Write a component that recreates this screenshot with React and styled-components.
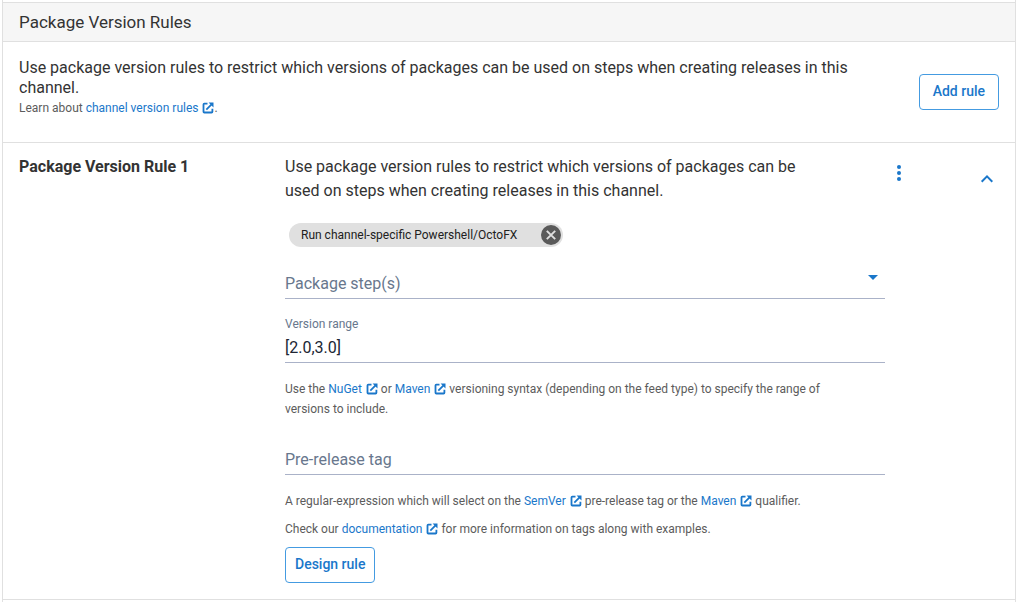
import React, { useState } from "react";
import styled, { createGlobalStyle } from "styled-components";

const colors = {
  blue: "#1a77ca",
  blueBorder: "#449be1",
  text: "#333333",
  muted: "#5c5c5c",
  label: "#68778d",
  fieldLine: "#aab2c8",
  line: "#e0e0e0",
};

const GlobalStyle = createGlobalStyle`
  *, *::before, *::after { box-sizing: border-box; }
  body {
    margin: 0;
    background: #ffffff;
    color: ${colors.text};
    font-family: Roboto, "Liberation Sans", sans-serif;
    font-size: 16px;
  }
`;

const Panel = styled.main`
  min-height: 100vh;
  padding-top: 2px;
  margin: 0 2px;
  border-left: 1px solid ${colors.line};
  border-right: 1px solid ${colors.line};
`;

const PanelHeader = styled.header`
  padding: 8px 16px;
  background: #f6f6f6;
  border-top: 1px solid ${colors.line};
  border-bottom: 1px solid ${colors.line};
`;

const PanelTitle = styled.h1`
  margin: 0;
  font-size: 17px;
  font-weight: 400;
  line-height: 22px;
`;

const Intro = styled.section`
  display: flex;
  align-items: center;
  justify-content: space-between;
  gap: 40px;
  padding: 16px;
  border-bottom: 1px solid ${colors.line};
`;

const IntroBody = styled.div`
  padding-bottom: 8px;
`;

const IntroText = styled.p`
  margin: 0;
  line-height: 20px;
`;

const Help = styled.p`
  margin: 0;
  color: ${colors.muted};
  font-size: 12px;
  line-height: 20px;
`;

const Link = styled.a`
  color: ${colors.blue};
  text-decoration: none;
`;

const LinkMark = styled.svg`
  width: 12px;
  height: 12px;
  margin-left: 4px;
  vertical-align: -2px;
`;

const OutlineButton = styled.button`
  flex: none;
  height: 36px;
  padding: 0 ${(p) => p.$pad}px 2px;
  border: 1px solid ${colors.blueBorder};
  border-radius: 4px;
  background: #ffffff;
  color: ${colors.blue};
  font: 500 14px/20px Roboto, "Liberation Sans", sans-serif;
  cursor: pointer;
`;

const Rule = styled.section`
  display: grid;
  grid-template-columns: 266px minmax(0, 1fr) 28px 86px;
  padding: 12px 16px 16px;
  border-bottom: 1px solid ${colors.line};
`;

const RuleTitle = styled.h2`
  margin: 0;
  font-size: 16px;
  font-weight: 700;
  line-height: 24px;
`;

const RuleSummary = styled.p`
  max-width: 540px;
  margin: 0;
  line-height: 24px;
`;

const IconButton = styled.button`
  display: flex;
  justify-content: center;
  justify-self: ${(p) => p.$align};
  align-self: start;
  width: 24px;
  height: 24px;
  margin-top: ${(p) => p.$top}px;
  padding: 0;
  border: 0;
  background: none;
  color: ${colors.blue};
  cursor: pointer;
`;

const Chip = styled.div`
  display: inline-flex;
  align-items: center;
  justify-content: space-between;
  gap: 12px;
  min-width: 274px;
  height: 24px;
  margin: 20px 4px 0;
  padding: 0 1px 0 12px;
  border-radius: 12px;
  background: #e0e0e0;
  color: #202020;
  font-size: 12px;
`;

const ChipRemove = styled.button`
  display: flex;
  width: 22px;
  height: 22px;
  padding: 0;
  border: 0;
  background: none;
  cursor: pointer;
`;

const Field = styled.div`
  display: flex;
  flex-direction: column;
  margin-top: ${(p) => p.$top}px;
  border-bottom: 1px solid ${colors.fieldLine};
`;

const FieldLabel = styled.label`
  color: ${colors.label};
  font-size: 12px;
  line-height: 20px;
`;

const TextInput = styled.input`
  width: 100%;
  height: 28px;
  padding: 0 0 2px;
  border: 0;
  outline: 0;
  background: none;
  color: #202634;
  font: 400 16px/24px Roboto, "Liberation Sans", sans-serif;
  &::placeholder { color: ${colors.label}; opacity: 1; }
`;

const SelectField = styled.div`
  display: grid;
  grid-template-columns: minmax(0, 1fr) 24px;
  margin-top: 23px;
  border-bottom: 1px solid ${colors.fieldLine};
`;

const Select = styled.select`
  grid-area: 1 / 1 / 2 / 3;
  width: 100%;
  height: 28px;
  padding: 0;
  border: 0;
  outline: 0;
  appearance: none;
  background: none;
  color: ${colors.label};
  font: 400 16px/24px Roboto, "Liberation Sans", sans-serif;
`;

const SelectArrow = styled.svg`
  grid-area: 1 / 2;
  width: 24px;
  height: 16px;
  pointer-events: none;
`;

const HelpBlock = styled.div`
  display: grid;
  gap: 8px;
  max-width: 560px;
  margin-top: 16px;
`;

const Actions = styled.div`
  display: flex;
  margin-top: 8px;
`;

function ExternalLink({ href, children }) {
  return (
    <Link href={href}>
      {children}
      <LinkMark viewBox="0 0 12 12" aria-hidden="true">
        <path d="M5.5 1.6H2.3Q1.5 1.6 1.5 2.4V9.7Q1.5 10.5 2.3 10.5H9.6Q10.4 10.5 10.4 9.7V6.8" fill="none" stroke="currentColor" strokeWidth="1.8" />
        <path d="M4.3 7.7L9.8 2.2" stroke="currentColor" strokeWidth="1.8" />
        <path d="M6.6 .5H11.5V5.4Z" fill="currentColor" />
      </LinkMark>
    </Link>
  );
}

export default function App() {
  const [range, setRange] = useState("[2.0,3.0]");
  const [tag, setTag] = useState("");
  return (
    <>
      <GlobalStyle />
      <Panel>
        <PanelHeader>
          <PanelTitle>Package Version Rules</PanelTitle>
        </PanelHeader>
        <Intro>
          <IntroBody>
            <IntroText>
              Use package version rules to restrict which versions of packages can be used on steps when creating releases in this channel.
            </IntroText>
            <Help>
              Learn about <ExternalLink href="#rules">channel version rules</ExternalLink>.
            </Help>
          </IntroBody>
          <OutlineButton type="button" $pad={13}>Add rule</OutlineButton>
        </Intro>
        <Rule>
          <RuleTitle>Package Version Rule 1</RuleTitle>
          <div>
            <RuleSummary>
              Use package version rules to restrict which versions of packages can be used on steps when creating releases in this channel.
            </RuleSummary>
            <Chip>
              Run channel-specific Powershell/OctoFX
              <ChipRemove type="button" aria-label="Remove step">
                <svg width="22" height="22" viewBox="0 0 22 22" aria-hidden="true">
                  <circle cx="11" cy="11" r="10" fill="#5a5a5a" />
                  <path d="M6.8 6.8L15.2 15.2M15.2 6.8L6.8 15.2" stroke="#e0e0e0" strokeWidth="1.9" />
                </svg>
              </ChipRemove>
            </Chip>
            <SelectField>
              <Select aria-label="Package step(s)" defaultValue="">
                <option value="">Package step(s)</option>
              </Select>
              <SelectArrow viewBox="0 0 24 16" aria-hidden="true">
                <path d="M7 5H17L12 10Z" fill={colors.blue} />
              </SelectArrow>
            </SelectField>
            <Field $top={15}>
              <FieldLabel htmlFor="range">Version range</FieldLabel>
              <TextInput id="range" value={range} onChange={(e) => setRange(e.target.value)} />
            </Field>
            <HelpBlock>
              <Help>
                Use the <ExternalLink href="#nuget">NuGet</ExternalLink> or <ExternalLink href="#maven">Maven</ExternalLink> versioning
                syntax (depending on the feed type) to specify the range of versions to include.
              </Help>
            </HelpBlock>
            <Field $top={27}>
              <TextInput aria-label="Pre-release tag" placeholder="Pre-release tag" value={tag} onChange={(e) => setTag(e.target.value)} />
            </Field>
            <HelpBlock>
              <Help>
                A regular-expression which will select on the <ExternalLink href="#semver">SemVer</ExternalLink> pre-release tag or
                the <ExternalLink href="#maven-tags">Maven</ExternalLink> qualifier.
              </Help>
              <Help>
                Check our <ExternalLink href="#docs">documentation</ExternalLink> for more information on tags along with examples.
              </Help>
            </HelpBlock>
            <Actions>
              <OutlineButton type="button" $pad={9}>Design rule</OutlineButton>
            </Actions>
          </div>
          <IconButton type="button" aria-label="Rule actions" $align="center" $top={6}>
            <svg width="24" height="24" viewBox="0 0 24 24" fill="currentColor" aria-hidden="true">
              <circle cx="12" cy="6" r="2" />
              <circle cx="12" cy="12" r="2" />
              <circle cx="12" cy="18" r="2" />
            </svg>
          </IconButton>
          <IconButton type="button" aria-label="Collapse rule" $align="end" $top={12}>
            <svg width="24" height="24" viewBox="0 0 24 24" aria-hidden="true">
              <path d="M6.7 14.7L12 9.4L17.3 14.7" fill="none" stroke="currentColor" strokeWidth="2" />
            </svg>
          </IconButton>
        </Rule>
      </Panel>
    </>
  );
}
